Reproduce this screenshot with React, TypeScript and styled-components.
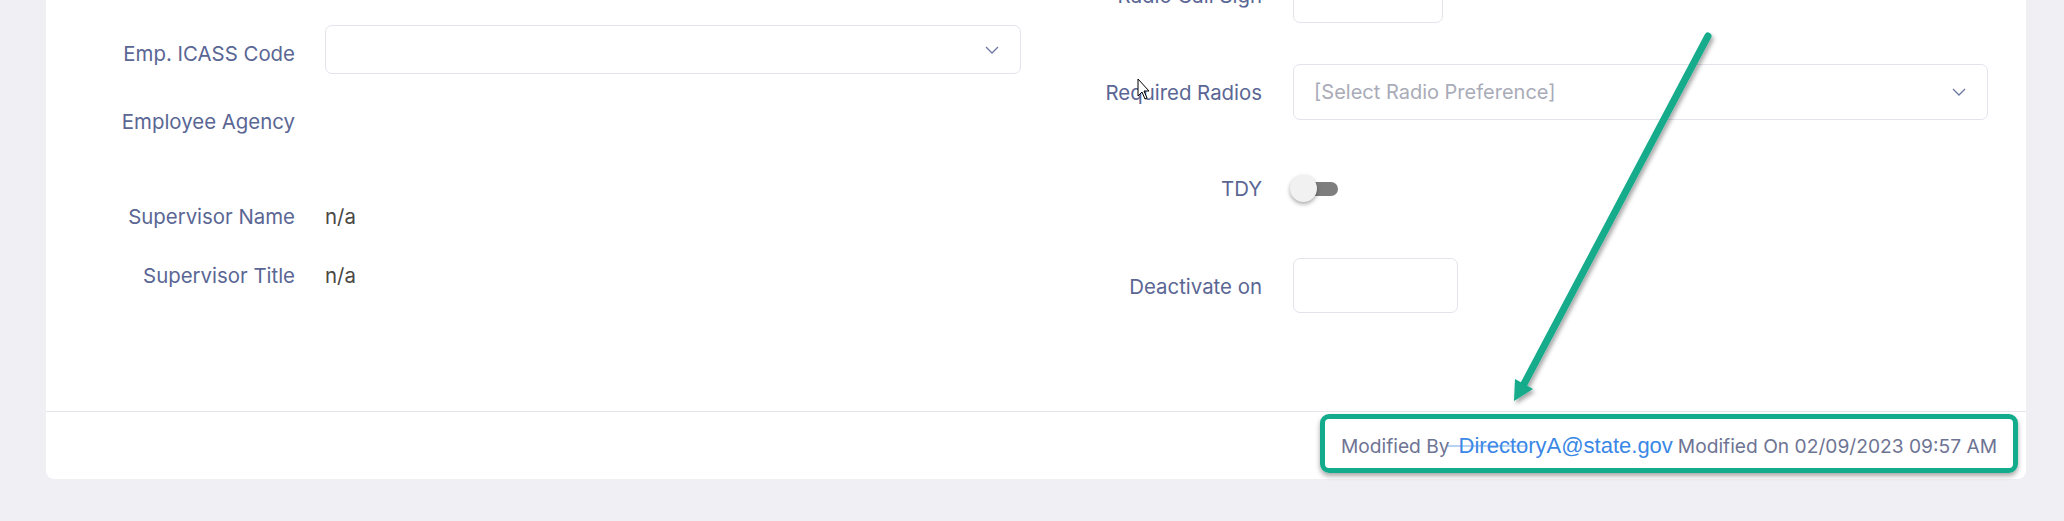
import React from 'react';
import styled, { createGlobalStyle } from 'styled-components';

const LABEL_COLOR = '#5a6694';
const BORDER = '#e2e3eb';
const GREEN = '#12ab8b';

const GlobalStyle = createGlobalStyle`
  html, body {
    margin: 0;
    padding: 0;
    background: #efeff4;
  }
  body {
    font-family: Inter, "Noto Sans", sans-serif;
  }
`;

const Page = styled.div`
  position: relative;
  width: 2064px;
  height: 521px;
  overflow: hidden;
  box-sizing: border-box;
  padding: 0 38px 0 46px;
`;

const Card = styled.section`
  margin-top: -60px;
  width: 1980px;
  background: #fff;
  border-radius: 0 0 8px 8px;
`;

const Body = styled.div`
  display: grid;
  grid-template-columns: 1fr 1fr;
  column-gap: 30px;
  padding: 28px 38px 98px;
`;

const Column = styled.div`
  display: flex;
  flex-direction: column;
`;

const Row = styled.div<{ $top?: number; $min?: number; $gap?: number }>`
  display: grid;
  grid-template-columns: 211px 1fr;
  column-gap: ${(p) => p.$gap ?? 30}px;
  align-items: center;
  margin-top: ${(p) => p.$top ?? 0}px;
  min-height: ${(p) => p.$min ?? 30}px;
`;

const Label = styled.label<{ $shift?: number }>`
  text-align: right;
  font-size: 20.4px;
  line-height: 30px;
  color: ${LABEL_COLOR};
  padding-top: ${(p) => p.$shift ?? 0}px;
  white-space: nowrap;
`;

const Value = styled.span`
  font-size: 20.4px;
  line-height: 30px;
  color: #4a4744;
`;

const TextBox = styled.input<{ $w: number; $h: number }>`
  box-sizing: border-box;
  width: ${(p) => p.$w}px;
  height: ${(p) => p.$h}px;
  border: 1px solid ${BORDER};
  border-radius: 7px;
  background: #fff;
  outline: none;
  font: inherit;
`;

const Select = styled.div<{ $h: number }>`
  box-sizing: border-box;
  height: ${(p) => p.$h}px;
  border: 1px solid ${BORDER};
  border-radius: 7px;
  display: flex;
  align-items: center;
  justify-content: space-between;
  padding: 0 21px 0 20px;
`;

const Placeholder = styled.span`
  font-size: 20px;
  color: #a9abb8;
`;

const Switch = styled.div`
  position: relative;
  width: 48px;
  height: 28px;
`;

const Track = styled.div`
  position: absolute;
  left: 5px;
  top: 7px;
  width: 40px;
  height: 14px;
  border-radius: 7px;
  background: #7e7e7e;
`;

const Knob = styled.div`
  position: absolute;
  left: -3px;
  top: 0;
  width: 27px;
  height: 27px;
  border-radius: 50%;
  background: #f1f1f1;
  box-shadow: 0 2px 4px rgba(0, 0, 0, 0.35);
`;

const Footer = styled.footer`
  border-top: 1px solid #e4e4ea;
  display: flex;
  justify-content: flex-end;
  padding: 2px 8px 6px;
`;

const Meta = styled.div`
  box-sizing: border-box;
  height: 59px;
  display: flex;
  align-items: center;
  padding: 5px 16px 0 16px;
  border: 5px solid ${GREEN};
  border-radius: 9px;
  box-shadow: 0 3px 5px rgba(0, 0, 0, 0.35);
  font-size: 19.2px;
  color: #6e7494;
  white-space: nowrap;
`;

const Email = styled.a`
  position: relative;
  margin: 0 5px 0 9px;
  font-family: "Liberation Sans", Arial, sans-serif;
  font-size: 22px;
  color: #3a87e6;
  text-decoration: none;

  &::before {
    content: '';
    position: absolute;
    left: -12px;
    top: 45%;
    width: 80px;
    height: 2px;
    background: rgba(74, 144, 226, 0.4);
  }
`;

const Overlay = styled.svg`
  position: absolute;
  left: 0;
  top: 0;
  pointer-events: none;
`;

const Chevron = () => (
  <svg width="14" height="8" viewBox="0 0 14 8">
    <polyline points="1,1 7,7 13,1" fill="none" stroke="#6a78a3" strokeWidth="1.3" />
  </svg>
);

export default function App() {
  return (
    <>
      <GlobalStyle />
      <Page>
        <Card>
          <Body>
            <Column>
              <Row $top={57} $min={49}>
                <Label $shift={9}>Emp. ICASS Code</Label>
                <Select $h={49}>
                  <span />
                  <Chevron />
                </Select>
              </Row>
              <Row $top={23} $min={49}>
                <Label>Employee Agency</Label>
                <span />
              </Row>
              <Row $top={56}>
                <Label>Supervisor Name</Label>
                <Value>n/a</Value>
              </Row>
              <Row $top={29}>
                <Label>Supervisor Title</Label>
                <Value>n/a</Value>
              </Row>
            </Column>
            <Column>
              <Row $min={55} $gap={31}>
                <Label>Radio Call Sign</Label>
                <TextBox $w={150} $h={55} readOnly />
              </Row>
              <Row $top={41} $min={56} $gap={31}>
                <Label $shift={2}>Required Radios</Label>
                <Select $h={56}>
                  <Placeholder>[Select Radio Preference]</Placeholder>
                  <Chevron />
                </Select>
              </Row>
              <Row $top={54} $gap={31}>
                <Label>TDY</Label>
                <Switch>
                  <Track />
                  <Knob />
                </Switch>
              </Row>
              <Row $top={54} $min={55} $gap={31}>
                <Label $shift={3}>Deactivate on</Label>
                <TextBox $w={165} $h={55} readOnly />
              </Row>
            </Column>
          </Body>
          <Footer>
            <Meta>
              <span>Modified By</span>
              <Email>DirectoryA@state.gov</Email>
              <span>Modified On 02/09/2023 09:57 AM</span>
            </Meta>
          </Footer>
        </Card>

        <Overlay width="2064" height="521" viewBox="0 0 2064 521">
          <defs>
            <filter id="shadow" x="-20%" y="-20%" width="140%" height="140%">
              <feDropShadow dx="2" dy="3" stdDeviation="2" floodColor="#000" floodOpacity="0.35" />
            </filter>
          </defs>
          <g filter="url(#shadow)" fill={GREEN}>
            <line x1="1708" y1="36" x2="1524" y2="384" stroke={GREEN} strokeWidth="7" strokeLinecap="round" />
            <polygon points="1514,401 1515,379 1533,389" />
          </g>
          <path
            d="M1138 79 L1138 96 L1142 92 L1145 99 L1147 98 L1144 91 L1149 91 Z"
            fill="#fff"
            stroke="#000"
            strokeWidth="1"
          />
        </Overlay>
      </Page>
    </>
  );
}
